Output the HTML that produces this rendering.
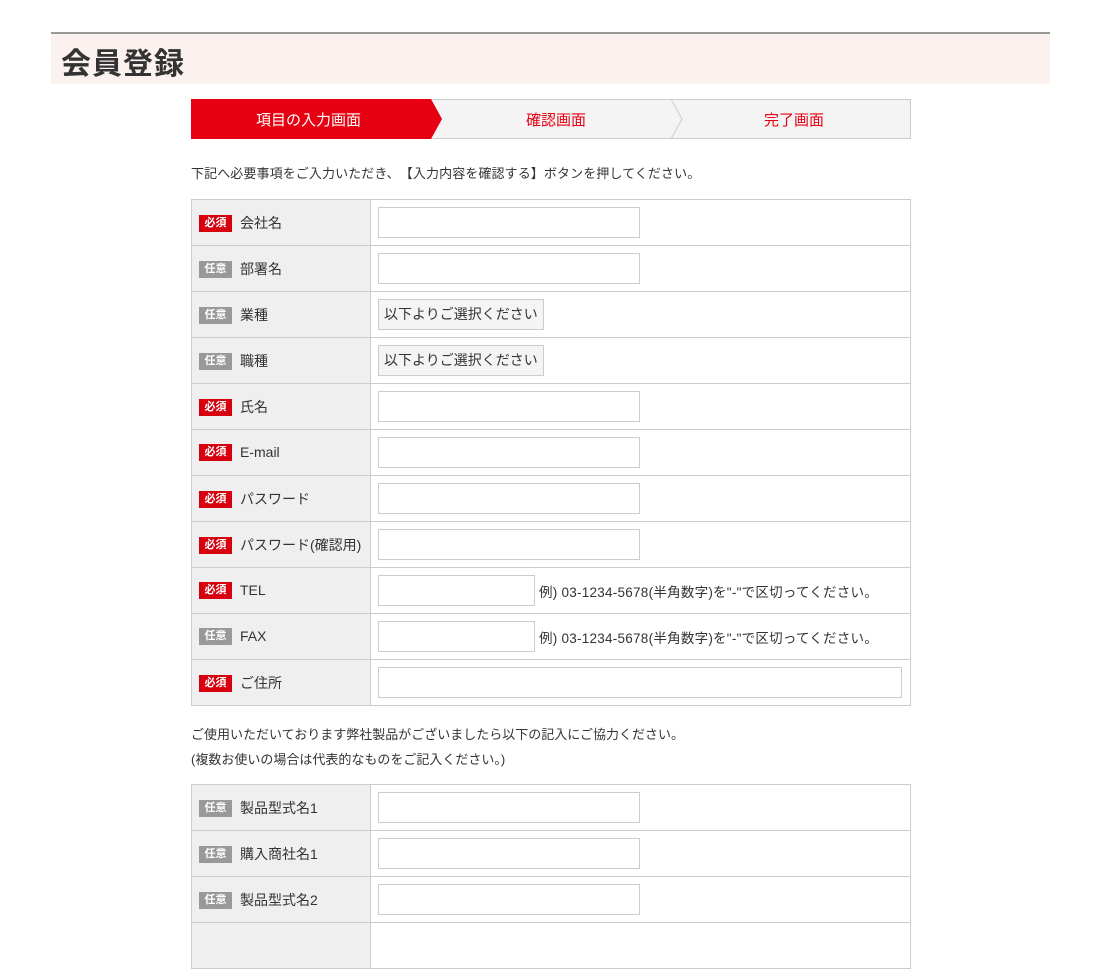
<!DOCTYPE html>
<html><head><meta charset="utf-8"><style>
*{margin:0;padding:0;box-sizing:border-box}
body{width:1100px;height:930px;overflow:hidden;background:#fff;font-family:"Liberation Sans","Noto Sans CJK JP",sans-serif;color:#333;position:relative}
.hd{position:absolute;left:51px;top:32px;width:999px;height:52px;background:#fbf2ef;border-top:2px solid #999}
.hd h1{position:absolute;left:10px;top:5px;font-size:30px;font-weight:bold;color:#333;letter-spacing:1px}
.steps{position:absolute;left:191px;top:99px;width:720px;height:40px;border:1px solid #ccc;background:#f4f4f4}
.steps svg{position:absolute;left:-1px;top:-1px}
.st{position:absolute;top:9px;font-size:15px;color:#e60012}
.p{position:absolute;left:191px;font-size:13px;color:#333}
table{position:absolute;left:191px;width:720px;border-collapse:collapse}
td{border:1px solid #ccc;height:46px;font-size:14px;vertical-align:middle}
td.l{width:179px;background:#efefef;padding-left:7px}
td.r{padding-left:7px}
.b{display:inline-block;width:33px;height:17px;line-height:17px;text-align:center;font-size:11px;font-weight:bold;color:#fff;margin-right:8px;vertical-align:middle}
.req{background:#d7000f}.opt{background:#999}
.i{display:inline-block;width:262px;height:31px;border:1px solid #ccc;background:#fff;vertical-align:middle}
.t{width:157px}
.w{width:524px}
.s{display:inline-block;height:31px;line-height:29px;padding:0 5px;border:1px solid #ccc;background:#f4f4f4;font-size:14px;vertical-align:middle}
.n{font-size:13.5px;vertical-align:middle;margin-left:4px;letter-spacing:0.25px}
</style></head><body>
<div class="hd"><h1>会員登録</h1></div>
<div class="steps">
<svg width="720" height="40"><polygon points="0,0 240,0 251,20 240,40 0,40" fill="#e60012"/><polyline points="480,0 491,20 480,40" fill="none" stroke="#ccc"/></svg>
<span class="st" style="left:64px;color:#fff">項目の入力画面</span>
<span class="st" style="left:334px">確認画面</span>
<span class="st" style="left:572px">完了画面</span>
</div>
<div class="p" style="top:163px;letter-spacing:0.1px">下記へ必要事項をご入力いただき、&#12288;【入力内容を確認する】ボタンを押してください。</div>
<table style="top:199px">
<tr><td class="l"><span class="b req">必須</span>会社名</td><td class="r"><span class="i"></span></td></tr>
<tr><td class="l"><span class="b opt">任意</span>部署名</td><td class="r"><span class="i"></span></td></tr>
<tr><td class="l"><span class="b opt">任意</span>業種</td><td class="r"><span class="s">以下よりご選択ください</span></td></tr>
<tr><td class="l"><span class="b opt">任意</span>職種</td><td class="r"><span class="s">以下よりご選択ください</span></td></tr>
<tr><td class="l"><span class="b req">必須</span>氏名</td><td class="r"><span class="i"></span></td></tr>
<tr><td class="l"><span class="b req">必須</span>E-mail</td><td class="r"><span class="i"></span></td></tr>
<tr><td class="l"><span class="b req">必須</span>パスワード</td><td class="r"><span class="i"></span></td></tr>
<tr><td class="l"><span class="b req">必須</span>パスワード(確認用)</td><td class="r"><span class="i"></span></td></tr>
<tr><td class="l"><span class="b req">必須</span>TEL</td><td class="r"><span class="i t"></span><span class="n">例) 03-1234-5678(半角数字)を"-"で区切ってください。</span></td></tr>
<tr><td class="l"><span class="b opt">任意</span>FAX</td><td class="r"><span class="i t"></span><span class="n">例) 03-1234-5678(半角数字)を"-"で区切ってください。</span></td></tr>
<tr><td class="l"><span class="b req">必須</span>ご住所</td><td class="r"><span class="i w"></span></td></tr>
</table>
<div class="p" style="top:724px">ご使用いただいております弊社製品がございましたら以下の記入にご協力ください。</div>
<div class="p" style="top:749px">(複数お使いの場合は代表的なものをご記入ください。)</div>
<table style="top:784px">
<tr><td class="l"><span class="b opt">任意</span>製品型式名1</td><td class="r"><span class="i"></span></td></tr>
<tr><td class="l"><span class="b opt">任意</span>購入商社名1</td><td class="r"><span class="i"></span></td></tr>
<tr><td class="l"><span class="b opt">任意</span>製品型式名2</td><td class="r"><span class="i"></span></td></tr>
<tr><td class="l"></td><td class="r"></td></tr>
</table>
</body></html>
